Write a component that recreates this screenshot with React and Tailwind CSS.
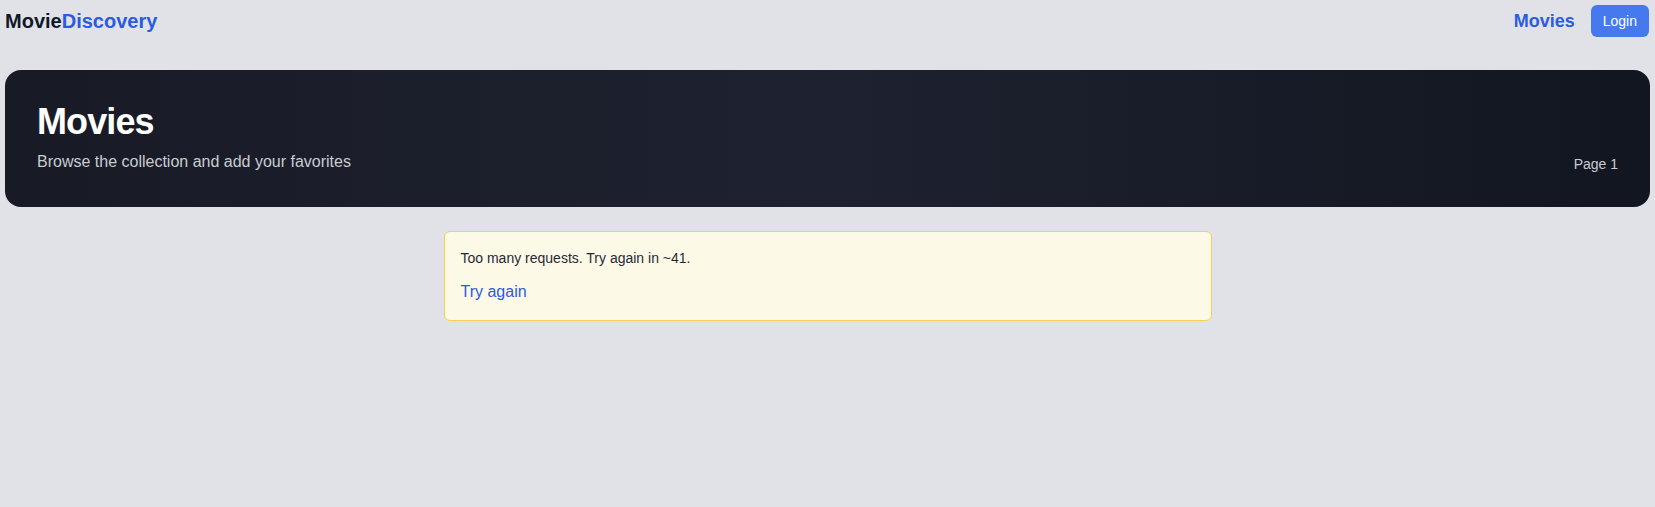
export default function App() {
  return (
    <div className="min-h-[507px] bg-[#e1e2e7] font-['Liberation_Sans',Arial,sans-serif]">
      <header className="flex items-center justify-between pl-[5px] pr-[6px] py-[5px]">
        <div className="text-xl font-bold">
          <span className="text-[#111827]">Movie</span>
          <span className="text-[#2b5bdf]">Discovery</span>
        </div>
        <nav className="flex items-center gap-4">
          <a className="text-lg font-bold text-[#2b5bdf]">Movies</a>
          <button className="h-8 rounded-md bg-[#4679ee] px-3 text-sm text-white">Login</button>
        </nav>
      </header>
      <main className="px-[5px] pt-[28px]">
        <section className="flex items-end justify-between rounded-2xl bg-gradient-to-r from-[#181b26] via-[#1e2230] to-[#121620] px-8 pt-8 pb-[33px]">
          <div>
            <h1 className="text-4xl font-bold tracking-tight text-white">Movies</h1>
            <p className="mt-2 text-base text-[#c9ccd3]">Browse the collection and add your favorites</p>
          </div>
          <div className="text-sm text-[#c9ccd3]">Page 1</div>
        </section>
        <div className="mx-auto mt-6 max-w-3xl rounded-md border border-[#f6cf55] bg-[#fdf9e7] p-4">
          <p className="text-sm text-[#1f2937]">Too many requests. Try again in ~41.</p>
          <button className="mt-3 text-base text-[#2b5bdf]">Try again</button>
        </div>
      </main>
    </div>
  );
}
